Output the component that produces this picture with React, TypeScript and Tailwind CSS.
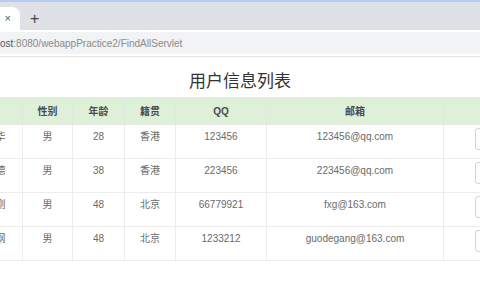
import React from "react";

const users = [
  { name: "张小华", sex: "男", age: 28, from: "香港", qq: "123456", email: "123456@qq.com" },
  { name: "李小德", sex: "男", age: 38, from: "香港", qq: "223456", email: "223456@qq.com" },
  { name: "范小刚", sex: "男", age: 48, from: "北京", qq: "66779921", email: "fxg@163.com" },
  { name: "郭德纲", sex: "男", age: 48, from: "北京", qq: "1233212", email: "guodegang@163.com" },
];

const headers = ["姓名", "性别", "年龄", "籍贯", "QQ", "邮箱", "操作"];

export default function App() {
  return (
    <div
      className="w-[480px] h-[300px] overflow-hidden bg-white"
      style={{ fontFamily: '"Liberation Sans", "Noto Sans CJK SC", sans-serif' }}
    >
      {/* tab strip */}
      <div className="h-[30px] bg-[#dee1e6] border-t-2 border-[#b3cdf5] flex items-end">
        <div className="h-[23px] w-[20px] bg-white rounded-tr-[8px] flex items-center justify-end pr-[9px] text-[11px] text-[#555]">
          ×
        </div>
        <div className="ml-[10px] h-[23px] flex items-center text-[16px] text-[#444] leading-none">+</div>
      </div>

      {/* address bar */}
      <div className="h-[27px] bg-white border-b border-[#e3e3e3] pt-[2px]">
        <div className="h-[22px] bg-[#f1f3f4] flex items-center text-[10px] whitespace-nowrap">
          <span className="text-[#555]">ost</span>
          <span className="text-[#8a8a8a]">:8080/webappPractice2/FindAllServlet</span>
        </div>
      </div>

      {/* page */}
      <div className="h-[40px] pt-[13px] text-center text-[17px] leading-[24px] text-[#333]">用户信息列表</div>

      <table className="table-fixed border-collapse ml-[-42px] w-[635px] text-[10px]">
        <colgroup>
          <col className="w-[64px]" />
          <col className="w-[50px]" />
          <col className="w-[52px]" />
          <col className="w-[51px]" />
          <col className="w-[91px]" />
          <col className="w-[177px]" />
          <col className="w-[150px]" />
        </colgroup>
        <thead>
          <tr className="bg-[#dff0d8] h-[27px]">
            {headers.map((h, i) => (
              <th
                key={h}
                className={`border border-[#e2e8e0] font-bold text-[#4a4a4a] p-0 align-middle ${i === 6 ? "text-transparent" : ""}`}
              >
                {h}
              </th>
            ))}
          </tr>
        </thead>
        <tbody>
          {users.map((u) => (
            <tr key={u.email} className="h-[34px] text-[#6a6a6a]">
              <td className="border border-[#ececec] text-center align-top pt-[5px] leading-[13px] whitespace-nowrap">{u.name}</td>
              <td className="border border-[#ececec] text-center align-top pt-[5px] leading-[13px]">{u.sex}</td>
              <td className="border border-[#ececec] text-center align-top pt-[5px] leading-[13px]">{u.age}</td>
              <td className="border border-[#ececec] text-center align-top pt-[5px] leading-[13px]">{u.from}</td>
              <td className="border border-[#ececec] text-center align-top pt-[5px] leading-[13px]">{u.qq}</td>
              <td className="border border-[#ececec] text-center align-top pt-[5px] leading-[13px]">{u.email}</td>
              <td className="border border-[#ececec] align-top pt-[3px] pl-[31px]">
                <div className="flex gap-[4px]">
                  <button className="h-[22px] w-[40px] bg-white border border-[#d4d4d4] rounded-[3px] text-[10px] text-[#333]">修改</button>
                  <button className="h-[22px] w-[40px] bg-white border border-[#d4d4d4] rounded-[3px] text-[10px] text-[#333]">删除</button>
                </div>
              </td>
            </tr>
          ))}
        </tbody>
      </table>
    </div>
  );
}
